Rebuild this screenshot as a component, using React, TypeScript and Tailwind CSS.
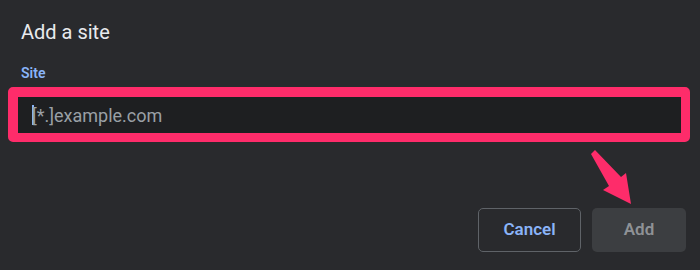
import React from "react";

export default function App() {
  return (
    <div
      className="relative w-[700px] h-[270px] bg-[#292a2d] overflow-hidden"
      style={{ fontFamily: "Roboto, 'Liberation Sans', sans-serif" }}
    >
      <div className="flex flex-col pt-5">
        <div className="pl-[21px] text-[20px] leading-[24px] text-[#e8eaed]">Add a site</div>
        <div className="pl-[21px] mt-[19px] text-[14px] leading-[20px] font-semibold text-[#8ab4f8]">Site</div>
        <div className="ml-[8px] mt-[4px] w-[682px] h-[55px] border-t-[10px] border-l-[10px] border-r-[9px] border-b-[9px] border-[#fe2c6a] rounded-[5px] bg-[#1e1f21]">
          <div className="h-full flex items-center pl-[14px] text-[18px] text-[#9aa0a6]">
            <span className="inline-block w-[2px] h-[20px] bg-[#8ab4f8] -mr-[2px]"></span>
            <span>[*.]example.com</span>
          </div>
        </div>
        <div className="flex justify-end gap-[11px] pr-[14px] mt-[66px]">
          <button className="w-[103px] h-[44px] rounded-[5px] border border-[#5f6368] text-[17px] font-semibold text-[#8ab4f8]">
            Cancel
          </button>
          <button className="w-[94px] h-[44px] rounded-[5px] bg-[#3c3e41] text-[17px] font-semibold text-[#8f9296]">
            Add
          </button>
        </div>
      </div>
      <svg className="absolute left-0 top-0" width="700" height="270" viewBox="0 0 700 270">
        <polygon
          points="591,154 595,150 621,177 626,173 631,204 603,190 609,186"
          fill="#fe2c6a"
        />
      </svg>
    </div>
  );
}
